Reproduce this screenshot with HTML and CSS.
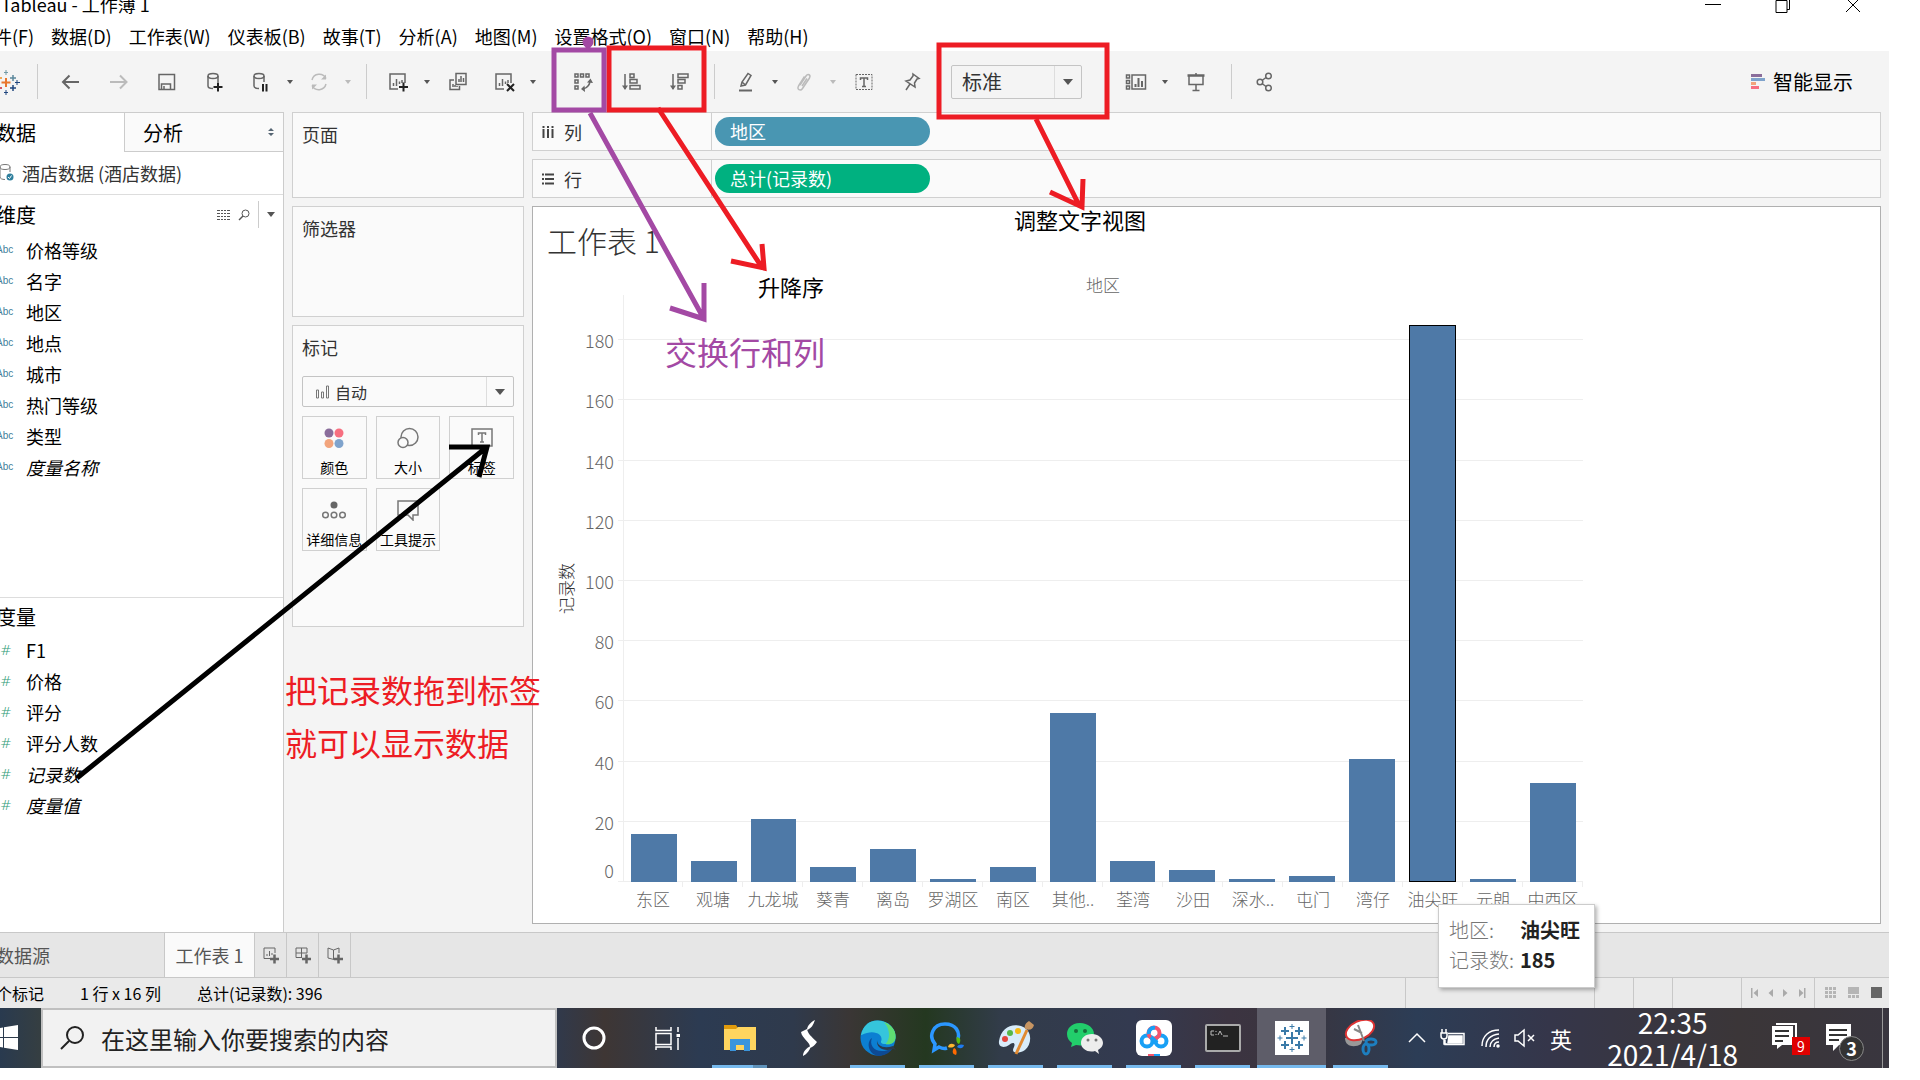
FILE: index.html
```html
<!DOCTYPE html>
<html lang="zh-CN">
<head>
    <meta charset="UTF-8">
    <meta name="viewport" content="width=device-width, initial-scale=1.0">
    <title>Tableau - 工作薄 1</title>
    <link rel="stylesheet" href="styles.css">
</head>
<body>
    <div class="app">
        <header class="titulo">
            <h1>Tableau - 工作薄 1</h1>
            <div class="ventana">
                <button type="button" aria-label="最小化"><svg width="16" height="16" viewBox="0 0 16 16"><path d="M0 7.500h16"/></svg></button>
                <button type="button" aria-label="还原"><svg width="16" height="16" viewBox="0 0 16 16"><path d="M1 3.500h11v12h-11zM12 12.500h2.500v-11h-11v2"/></svg></button>
                <button type="button" aria-label="关闭"><svg width="16" height="16" viewBox="0 0 16 16"><path d="M1 1l14 14M15 1L1 15"/></svg></button>
            </div>
        </header>

        <nav class="menu">
            <a href="#">件(F)</a>
            <a href="#">数据(D)</a>
            <a href="#">工作表(W)</a>
            <a href="#">仪表板(B)</a>
            <a href="#">故事(T)</a>
            <a href="#">分析(A)</a>
            <a href="#">地图(M)</a>
            <a href="#">设置格式(O)</a>
            <a href="#">窗口(N)</a>
            <a href="#">帮助(H)</a>
        </nav>

        <div class="toolbar">
            <button type="button" class="logo" aria-label="Tableau">
                <svg width="26" height="26" viewBox="0 0 26 26"><path d="M10 9v9M5.500 13.500h9" stroke="#e8762d" stroke-width="2"/><path d="M17 6v6M14 9h6" stroke="#5b879b" stroke-width="1.500"/><path d="M17 16v6M14 19h6" stroke="#1f457e" stroke-width="1.500"/><path d="M3 6v6M0 9h6" stroke="#eb912c" stroke-width="1.500"/><path d="M3 16v6M0 19h6" stroke="#c72035" stroke-width="1.500"/><path d="M10 1v5M8 3.500h4" stroke="#7199a6"/><path d="M10 21v5M8 23.500h4" stroke="#1f457e"/><path d="M21 11v5M19 13.500h5" stroke="#1f457e"/></svg>
            </button>
            <span class="sep"></span>
            <div class="grupo">
                <button type="button" class="tool" aria-label="撤消"><svg width="20" height="20" viewBox="0 0 20 20"><path d="M2 10h16M8.500 3.500L2 10l6.500 6.500" stroke-width="2"/></svg></button>
                <button type="button" class="tool claro" aria-label="重做"><svg width="20" height="20" viewBox="0 0 20 20"><path d="M1 10h16M11 3.500l6.500 6.500-6.500 6.500" stroke-width="2"/></svg></button>
                <button type="button" class="tool" aria-label="保存"><svg width="18" height="18" viewBox="0 0 18 18"><path d="M1 1.500h15.500v15H1zM3.500 16.500v-5.500h9v5.500M6 16v-3"/></svg></button>
                <button type="button" class="tool" aria-label="新建数据源"><svg width="20" height="20" viewBox="0 0 20 20"><ellipse cx="8" cy="4" rx="5" ry="2.500"/><path d="M3 4v10c0 1.500 2 2.500 5 2.500M13 4v6"/><path d="M8.500 15h9M13 10.500v9" stroke="#222" stroke-width="2"/></svg></button>
                <button type="button" class="tool con-flecha" aria-label="暂停自动更新"><svg width="20" height="20" viewBox="0 0 20 20"><ellipse cx="8" cy="4" rx="5" ry="2.500"/><path d="M3 4v10c0 1.500 2 2.500 5 2.500M13 4v6"/><path d="M12 12v7.500M15.500 12v7.500" stroke="#222" stroke-width="2"/></svg></button>
                <button type="button" class="flecha" aria-label="更多"></button>
                <button type="button" class="tool con-flecha claro" aria-label="刷新"><svg width="20" height="20" viewBox="0 0 20 20"><path d="M3 8a7.500 7.500 0 0 1 14-1.500M17 12a7.500 7.500 0 0 1-14 1.500"/><path d="M17 2.500v5h-5zM3 17.500v-5h5z" fill="#bbb" stroke="none"/></svg></button>
                <button type="button" class="flecha claro" aria-label="更多"></button>
            </div>
            <span class="sep"></span>
            <div class="grupo">
                <button type="button" class="tool con-flecha" aria-label="新建工作表"><svg width="22" height="20" viewBox="0 0 22 20"><path d="M11 17H3V2h15v9M6.500 14v-3M9.500 14V7M12.500 12V9.500M15 11V8"/><path d="M12 15h9M16.500 10.500v9" stroke="#222" stroke-width="2"/></svg></button>
                <button type="button" class="flecha" aria-label="更多"></button>
                <button type="button" class="tool" aria-label="复制"><svg width="20" height="20" viewBox="0 0 20 20"><path d="M8 1.500h10v11H8zM11 10V7M13 10V4M15.500 10V6M6 8H2v9.500h9.500V14M5 15v-3M7 15v-2M9 15v-1"/></svg></button>
                <button type="button" class="tool con-flecha" aria-label="清除"><svg width="22" height="20" viewBox="0 0 22 20"><path d="M11 17H3V2h15v9M6.500 14v-3M9.500 14V7M12.500 12V9.500M15 11V8"/><path d="M14 12l7 7M21 12l-7 7" stroke="#222" stroke-width="2"/></svg></button>
                <button type="button" class="flecha" aria-label="更多"></button>
            </div>
            <div class="grupo ordenar">
                <button type="button" class="tool" aria-label="交换行和列"><svg width="20" height="20" viewBox="0 0 20 20"><path d="M2 2h3v3H2zM7.500 2h3v3h-3zM13 2h3v3h-3zM2 8h3v3H2zM2 14h3v3H2zM17 8c0 5-3 8-7 9"/><path d="M14 10.500l3.500-4 2.500 4.500zM11.500 13.500L8 17l4 3z" fill="#666" stroke="none"/></svg></button>
                <button type="button" class="tool" aria-label="升序"><svg width="20" height="20" viewBox="0 0 20 20"><path d="M4 2v15M9 2h4v3.500H9zM9 7.500h7V11H9zM9 13.500h10V17H9z"/><path d="M1 13.500h6L4 18z" fill="#666" stroke="none"/></svg></button>
                <button type="button" class="tool" aria-label="降序"><svg width="20" height="20" viewBox="0 0 20 20"><path d="M4 2v15M9 2h10v3.500H9zM9 7.500h7V11H9zM9 13.500h4V17H9z"/><path d="M1 13.500h6L4 18z" fill="#666" stroke="none"/></svg></button>
            </div>
            <span class="sep"></span>
            <div class="grupo">
                <button type="button" class="tool con-flecha" aria-label="突出显示"><svg width="20" height="20" viewBox="0 0 20 20"><path d="M5 14l1-4L12 1.500l3 2L9.500 13zM6 10l3.500 3"/><path d="M3 18.500h13" stroke-width="2"/></svg></button>
                <button type="button" class="flecha" aria-label="更多"></button>
                <button type="button" class="tool con-flecha claro" aria-label="组"><svg width="20" height="20" viewBox="0 0 20 20"><path d="M6 13l6-9c2-3 5-1 3.500 2l-7 10.500c-2 3-6 1-4-2.500l6-9.500M8 14l5-7.500"/></svg></button>
                <button type="button" class="flecha claro" aria-label="更多"></button>
                <button type="button" class="tool" aria-label="显示标记标签"><svg width="20" height="20" viewBox="0 0 20 20"><path d="M2 2.500h16v15H2z" stroke-width="1" stroke-dasharray="2 1"/><path d="M6.500 8V6h7v2M10 6v8.500M8 14.500h4"/></svg></button>
                <button type="button" class="tool" aria-label="固定轴"><svg width="20" height="20" viewBox="0 0 20 20"><path d="M11 2l6 4.500-2 .5-2.500 4 .5 4-9-6 4-1 3-4zM8 12l-4 6"/></svg></button>
            </div>
            <span class="combo ajuste">
                <select aria-label="适合"><option>标准</option></select>
                <span class="abrir"></span>
            </span>
            <div class="grupo">
                <button type="button" class="tool con-flecha" aria-label="显示/隐藏卡"><svg width="22" height="18" viewBox="0 0 22 18"><path d="M1.500 2h3v3h-3zM1.500 7.500h3v3h-3zM1.500 13h3v3h-3zM7 2h13.500v14H7z"/><path d="M10.500 14v-3M13.500 14V5M17 14V8" stroke-width="2"/></svg></button>
                <button type="button" class="flecha" aria-label="更多"></button>
                <button type="button" class="tool" aria-label="演示模式"><svg width="20" height="20" viewBox="0 0 20 20"><path d="M3 4v8.500h14V4M10 12.500V18M6.500 18.500h7M10 1v2"/><path d="M1.500 3.500h17" stroke-width="2.500"/></svg></button>
            </div>
            <span class="sep"></span>
            <button type="button" class="tool" aria-label="共享"><svg width="18" height="20" viewBox="0 0 18 20"><circle cx="4" cy="10" r="2.800"/><circle cx="12.500" cy="4" r="2.800"/><circle cx="12.500" cy="16" r="2.800"/><path d="M6 8.500l4-3M6 11.500l4 3"/></svg></button>
            <button type="button" class="inteligente">
                <svg width="15" height="16" viewBox="0 0 15 16"><path fill="#8a6d9b" d="M0 0h11v3H0z"/><path fill="#7fa3cc" d="M0 4h14v3H0z"/><path fill="#f2a47c" d="M0 8h5v3H0z"/><path fill="#f76f80" d="M0 12h8v3H0z"/></svg>
                智能显示
            </button>
        </div>

        <main class="trabajo">
            <aside class="datos">
                <div class="pestanas">
                    <button type="button" class="activa">数据</button>
                    <button type="button">分析
                        <svg width="8" height="12" viewBox="0 0 8 12"><path fill="#566573" d="M4 2l3 3H1zM4 10l3-3H1z"/></svg>
                    </button>
                </div>
                <div class="fuente">
                    <svg width="18" height="20" viewBox="0 0 18 20"><g fill="none" stroke="#777"><ellipse cx="9" cy="4" rx="5" ry="2.500"/><path d="M4 4v10c0 1.500 2 2.500 5 2.500M14 4v5"/></g><circle cx="14" cy="14" r="3.500" fill="#2f7f9d"/><path d="M12 14l1.500 1.500 2-3" fill="none" stroke="#fff"/></svg>
                    酒店数据 (酒店数据)
                </div>
                <div class="campos">
                    <section class="seccion">
                        <h2>维度
                            <span class="acciones">
                                <svg width="13" height="12" viewBox="0 0 13 12"><path stroke="#555" d="M0 1.500h3M4 1.500h2M7 1.500h2M10 1.500h3M0 4.500h3M4 4.500h2M7 4.500h2M10 4.500h3M0 7.500h3M4 7.500h2M7 7.500h2M10 7.500h3M0 10.500h3M4 10.500h2M7 10.500h2M10 10.500h3"/></svg>
                                <svg width="12" height="12" viewBox="0 0 12 12"><circle cx="7.500" cy="4.500" r="3.500" fill="none" stroke="#555"/><path stroke="#555" stroke-width="1.500" d="M5 7l-4 4"/></svg>
                                <button type="button" class="flecha" aria-label="菜单"></button>
                            </span>
                        </h2>
                        <ul>
                            <li><span class="abc">Abc</span>价格等级</li>
                            <li><span class="abc">Abc</span>名字</li>
                            <li><span class="abc">Abc</span>地区</li>
                            <li><span class="abc">Abc</span>地点</li>
                            <li><span class="abc">Abc</span>城市</li>
                            <li><span class="abc">Abc</span>热门等级</li>
                            <li><span class="abc">Abc</span>类型</li>
                            <li><span class="abc">Abc</span><em>度量名称</em></li>
                        </ul>
                    </section>
                    <section class="seccion">
                        <h2>度量</h2>
                        <ul>
                            <li><span class="num">#</span>F1</li>
                            <li><span class="num">#</span>价格</li>
                            <li><span class="num">#</span>评分</li>
                            <li><span class="num">#</span>评分人数</li>
                            <li><span class="num">#</span><em>记录数</em></li>
                            <li><span class="num">#</span><em>度量值</em></li>
                        </ul>
                    </section>
                </div>
            </aside>

            <div class="tarjetas">
                <section class="tarjeta paginas"><h3>页面</h3></section>
                <section class="tarjeta filtros"><h3>筛选器</h3></section>
                <section class="tarjeta marcas">
                    <h3>标记</h3>
                    <span class="combo tipo">
                        <svg width="15" height="14" viewBox="0 0 15 14"><path fill="none" stroke="#777" d="M1.500 5h2v8h-2zM6.500 7h2v6h-2zM11.500 1h2v12h-2z"/></svg>
                        <select aria-label="标记类型"><option>自动</option></select>
                        <span class="abrir"></span>
                    </span>
                    <div class="botones">
                        <button type="button"><svg width="24" height="22" viewBox="0 0 24 22"><circle cx="7" cy="6" r="4.500" fill="#8a6d9b"/><circle cx="17" cy="6" r="4.500" fill="#f76f80"/><circle cx="7" cy="16.500" r="4.500" fill="#f2a47c"/><circle cx="17" cy="16.500" r="4.500" fill="#7fa3cc"/></svg>颜色</button>
                        <button type="button"><svg width="24" height="22" viewBox="0 0 24 22"><g fill="#fafafa" stroke="#777" stroke-width="1.500"><circle cx="13.500" cy="10" r="8.500"/><circle cx="7" cy="15.500" r="5"/></g></svg>大小</button>
                        <button type="button"><svg width="24" height="22" viewBox="0 0 24 22"><g fill="none" stroke="#777" stroke-width="1.500"><path d="M2 2h20v17H2z"/><path d="M8.500 8V6h7v2M12 6v9M10 15h4"/></g></svg>标签</button>
                        <button type="button"><svg width="24" height="22" viewBox="0 0 24 22"><circle cx="12" cy="6" r="3.500" fill="#666"/><g fill="none" stroke="#777" stroke-width="1.500"><circle cx="3.500" cy="16" r="2.800"/><circle cx="12" cy="16" r="2.800"/><circle cx="20.500" cy="16" r="2.800"/></g></svg>详细信息</button>
                        <button type="button"><svg width="24" height="22" viewBox="0 0 24 22"><path fill="none" stroke="#777" stroke-width="1.500" d="M2 2h20v14h-5v5l-5-5H2z"/></svg>工具提示</button>
                    </div>
                </section>
            </div>

            <div class="lienzo">
                <div class="estante">
                    <h3><svg width="12" height="14" viewBox="0 0 12 14"><path stroke="#444" stroke-width="2" d="M1.500 1v2M6 1v2M10.500 1v2M1.500 4v9M6 4v9M10.500 4v9"/></svg>列</h3>
                    <button type="button" class="pildora dimension">地区</button>
                </div>
                <div class="estante">
                    <h3><svg width="12" height="14" viewBox="0 0 12 14"><path stroke="#444" stroke-width="2" d="M0 2.500h2M0 7h2M0 11.500h2M3 2.500h9M3 7h9M3 11.500h9"/></svg>行</h3>
                    <button type="button" class="pildora medida">总计(记录数)</button>
                </div>

                <section class="vista">
                    <h2>工作表 1</h2>
                    <div class="grafico">
                        <div class="cabecera">地区</div>
                        <div class="eje-titulo"><span>记录数</span></div>
                        <div class="eje">
                            <span>0</span><span>20</span><span>40</span><span>60</span><span>80</span><span>100</span><span>120</span><span>140</span><span>160</span><span>180</span>
                        </div>
                        <div class="barras">
                            <div class="lineas"><i></i><i></i><i></i><i></i><i></i><i></i><i></i><i></i><i></i><i></i></div>
                            <div class="barra" style="--v:16"></div>
                            <div class="barra" style="--v:7"></div>
                            <div class="barra" style="--v:21"></div>
                            <div class="barra" style="--v:5"></div>
                            <div class="barra" style="--v:11"></div>
                            <div class="barra" style="--v:1"></div>
                            <div class="barra" style="--v:5"></div>
                            <div class="barra" style="--v:56"></div>
                            <div class="barra" style="--v:7"></div>
                            <div class="barra" style="--v:4"></div>
                            <div class="barra" style="--v:1"></div>
                            <div class="barra" style="--v:2"></div>
                            <div class="barra" style="--v:41"></div>
                            <div class="barra elegida" style="--v:185"></div>
                            <div class="barra" style="--v:1"></div>
                            <div class="barra" style="--v:33"></div>
                        </div>
                        <div class="categorias">
                            <span>东区</span><span>观塘</span><span>九龙城</span><span>葵青</span><span>离岛</span><span>罗湖区</span><span>南区</span><span>其他..</span><span>荃湾</span><span>沙田</span><span>深水..</span><span>屯门</span><span>湾仔</span><span>油尖旺</span><span>元朗</span><span>中西区</span>
                        </div>
                    </div>
                    <dl class="tooltip">
                        <dt>地区:</dt><dd>油尖旺</dd>
                        <dt>记录数:</dt><dd>185</dd>
                    </dl>
                </section>
            </div>
        </main>

        <div class="hojas">
            <button type="button" class="origen">数据源</button>
            <button type="button" class="hoja">工作表 1</button>
            <button type="button" class="nueva" aria-label="新建工作表"><svg width="18" height="18" viewBox="0 0 18 18"><path d="M8 12.500H2V2h11v5M5 10V8M7.500 10V5M10 9V7"/><path d="M8 13h9M12.500 8.500v9" stroke-width="2.500"/></svg></button>
            <button type="button" class="nueva" aria-label="新建仪表板"><svg width="18" height="18" viewBox="0 0 18 18"><path d="M8 11.500H2V2h11v5M2 7h11M7.500 2v9"/><path d="M8 13h9M12.500 8.500v9" stroke-width="2.500"/></svg></button>
            <button type="button" class="nueva" aria-label="新建故事"><svg width="18" height="18" viewBox="0 0 18 18"><path d="M8 13.500L2 12V2l5.500 2L13 2v5M7.500 4v9"/><path d="M8 13h9M12.500 8.500v9" stroke-width="2.500"/></svg></button>
        </div>

        <footer class="estado">
            <span>个标记</span>
            <span>1 行 x 16 列</span>
            <span>总计(记录数): 396</span>
            <div class="casillas">
                <i class="c-xl"></i><i class="c-s"></i><i class="c-s"></i><i class="c-m"></i>
                <div class="nav-hojas">
                    <svg width="66" height="12" viewBox="0 0 66 12"><path fill="#aaa" d="M0 1h1.500v10H0zM7 2v8L2.500 6zM22 2v8l-4.500-4zM32 2v8l4.500-4zM48 2v8l4.500-4zM53 1h1.500v10H53z"/></svg>
                </div>
                <div class="modos">
                    <svg width="58" height="12" viewBox="0 0 58 12"><path fill="#b5b5b5" d="M0 0h3v3H0zM4 0h3v3H4zM8 0h3v3H8zM0 4h3v3H0zM4 4h3v3H4zM8 4h3v3H8zM0 8h3v3H0zM4 8h3v3H4zM8 8h3v3H8zM23 0h11v7H23zM23 8h3v3h-3zM27 8h3v3h-3zM31 8h3v3h-3z"/><path fill="#666" d="M46 0h11v11H46z"/></svg>
                </div>
            </div>
        </footer>
    </div>

    <div class="barra-tareas">
        <button type="button" class="inicio" aria-label="开始"><svg width="18" height="26" viewBox="0 0 18 26"><path fill="#fff" d="M0 3l3-.5V12H0zM4 2.300L18 0v12H4zM0 13h3v9.500L0 22zM4 13h14v12L4 22.700z"/></svg></button>
        <label class="buscar">
            <svg width="26" height="26" viewBox="0 0 26 26"><circle cx="16" cy="10" r="8" fill="none" stroke="#222" stroke-width="2"/><path stroke="#222" stroke-width="2" d="M10 16l-8 8"/></svg>
            <input type="text" aria-label="搜索" placeholder="在这里输入你要搜索的内容">
        </label>
        <button type="button" class="icono sistema" aria-label="Cortana"><svg width="26" height="26" viewBox="0 0 26 26"><circle cx="13" cy="13" r="10" fill="none" stroke="#fff" stroke-width="3"/></svg></button>
        <button type="button" class="icono sistema" aria-label="任务视图"><svg width="26" height="26" viewBox="0 0 26 26"><path fill="none" stroke="#fff" stroke-width="1.500" d="M1 2v3.500h15V2M1 8.500h15v11H1zM1 25v-3h15v3M23 2v5M23 13v12"/><path fill="#fff" d="M21.500 9h3.500v3h-3.500z"/></svg></button>
        <button type="button" class="icono abierto doble" aria-label="文件资源管理器"><svg width="36" height="36" viewBox="0 0 36 36"><path fill="#e09a0b" d="M2 5h12l2 3v5H2z"/><path fill="#ffd55f" d="M2 9h12l2-2h18v23H2z"/><path fill="#3b95dc" d="M8 19h20v12h-6v-6h-8v6H8z"/></svg></button>
        <button type="button" class="icono" aria-label="S"><svg width="36" height="36" viewBox="0 0 36 36"><path fill="#fff" d="M24 0c-2 5-3 8-8 10 0-4 4-8 8-10zM10 12l6-3c1 5 4 7 10 13-2 3-4 5-7 6 1-6-8-9-9-16zM12 36c0-4 3-8 8-10-1 4-4 8-8 10z"/></svg></button>
        <button type="button" class="icono abierto" aria-label="Edge"><svg width="36" height="36" viewBox="0 0 36 36"><circle cx="18" cy="18" r="17.500" fill="#0c7fd2"/><path fill="#35c5dc" d="M1 15C3 5 10 0 18 .5 29 1 36 9 35.500 17c0 6-5 8-10 7-5 0-5-2-4-4 1-6-8-11-20-5z"/><path fill="#5fdc72" d="M24 2c8 3 12 9 11.500 15 0 6-5 8-10 7 5-5 5-14-1.500-22z"/><path fill="#0d4a94" d="M12 18c-4 9 6 18 21 10-4 6-10 8-15 8C8 34 6 22 12 18z"/><path fill="#2c394c" d="M17 20c0 6 7 9 16 6l3 4-3-1c-9 3-17-1-16-9z"/></svg></button>
        <button type="button" class="icono abierto" aria-label="企业微信"><svg width="36" height="36" viewBox="0 0 36 36"><path fill="none" stroke="#2b97ff" stroke-width="3.500" d="M18 28c-3 1-6 0-8-1l-5 3 1-6C-1 16 4 4 16 4c11 0 15 8 13 15"/><path fill="#5bbd10" d="M28 17c4 1 4 4 2 7-3-1-3-5-2-7z"/><path fill="#1e7af0" d="M35 25c-1 4-4 4-7 2 1-3 5-3 7-2z"/><path fill="#ff6a00" d="M27 35c-4-1-4-4-2-7 3 1 3 5 2 7z"/><path fill="#ffb82e" d="M19 27c1-4 4-4 7-2-1 3-5 3-7 2z"/></svg></button>
        <button type="button" class="icono abierto" aria-label="画图"><svg width="36" height="36" viewBox="0 0 36 36"><path fill="#d8ecfa" d="M1 21C3 8 13 3 23 6c12 4 11 18 4 24-6 4-15 4-11-3 2-5-2-5-5-2-4 3-11 3-10-4z"/><circle cx="7" cy="19" r="3" fill="#e2463d"/><circle cx="12" cy="13" r="3" fill="#56b848"/><circle cx="20" cy="11" r="3" fill="#f6b916"/><path stroke="#e08a32" stroke-width="3" d="M29 10L18 34"/><path fill="#c79562" d="M27 9c-1-4 1-6 4-8l5 4c-1 4-4 6-9 4z"/></svg></button>
        <button type="button" class="icono abierto" aria-label="微信"><svg width="38" height="36" viewBox="0 0 38 36"><path fill="#22ce6b" d="M14 3C5 3 1 9 1 14c0 4 2 7 5 9l-1 4 5-2c10 2 18-3 18-11C28 8 22 3 14 3z"/><path fill="#ededed" d="M26 14c-7 0-11 4-11 9 0 6 7 10 14 8l4 3-1-4c3-2 5-4 5-7 0-5-5-9-11-9z"/><g fill="#176f3c"><circle cx="10" cy="11" r="2"/><circle cx="19" cy="11" r="2"/></g><g fill="#777"><circle cx="22" cy="20" r="1.500"/><circle cx="30" cy="20" r="1.500"/></g></svg></button>
        <button type="button" class="icono abierto" aria-label="百度网盘"><svg width="36" height="36" viewBox="0 0 36 36"><rect width="36" height="36" rx="6" fill="#fff"/><g fill="none" stroke-width="4"><circle cx="11" cy="21" r="5.500" stroke="#18a0f5"/><circle cx="25" cy="21" r="5.500" stroke="#18a0f5"/><circle cx="18" cy="13" r="5.500" stroke="#f4546c"/><path stroke="#18a0f5" d="M13 14a5 5 0 0 1 6-6M15 17l6 6"/></g><path fill="#f4546c" d="M12 34h6v2h-6z"/><path fill="#18a0f5" d="M18 34h6v2h-6z"/></svg></button>
        <button type="button" class="icono abierto" aria-label="命令提示符"><svg width="36" height="28" viewBox="0 0 36 28"><rect x="1" y="1" width="34" height="26" rx="1" fill="#222" stroke="#aaa" stroke-width="2"/><path fill="none" stroke="#bbb" d="M9 7H6v4h3M11 7v1M11 10v1M13 11l2-4 2 4M18 12h5"/></svg></button>
        <button type="button" class="icono abierto actual" aria-label="Tableau"><svg width="34" height="34" viewBox="0 0 34 34"><path fill="#fff" d="M0 0h34v34H0z"/><path stroke="#3a7aa8" stroke-width="2" d="M17 11v12M11 17h12M10 6v8M6 10h8M24 6v8M20 10h8M10 20v8M6 24h8M24 20v8M20 24h8"/><path stroke="#3a7aa8" d="M17 3v5M14.500 5.500h5M17 26v5M14.500 28.500h5M5 14.500v5M2.500 17h5M29 14.500v5M26.500 17h5"/></svg></button>
        <button type="button" class="icono abierto" aria-label="截图工具"><svg width="36" height="36" viewBox="0 0 36 36"><path fill="#999" d="M2 18l20-4-4 10C12 28 2 27 2 18z"/><ellipse cx="17" cy="10" rx="15" ry="9" transform="rotate(-25 17 10)" fill="#fff" stroke="#d33" stroke-width="2"/><path stroke="#888" stroke-width="2" d="M15 5l6 16M11 9l8 4"/><g fill="none" stroke="#1d7fc0" stroke-width="3"><ellipse cx="28" cy="22" rx="5" ry="3"/><ellipse cx="23" cy="29" rx="3" ry="5"/></g></svg></button>

        <div class="bandeja">
            <svg width="18" height="12" viewBox="0 0 18 12"><path d="M1 10l8-8 8 8"/></svg>
            <svg width="26" height="20" viewBox="0 0 26 20"><path d="M8 5.500h16v11H5V12M2 1v4M6 1v4M1 5h6v3c0 2-1 3-3 3s-3-1-3-3zM4 11v5h3"/><path fill="#fff" d="M9 8h13v7H8z"/></svg>
            <svg width="20" height="22" viewBox="0 0 20 22"><path d="M2 19C2 9 9 3 19 3M6 20c0-8 5-12 13-13M10 20c0-5 3-8 9-9M14 20c0-3 2-5 5-5"/><circle cx="18" cy="19" r="1" fill="#fff"/></svg>
            <svg width="22" height="20" viewBox="0 0 22 20"><path d="M1 7h3l6-5v16l-6-5H1zM14 7l6 6M20 7l-6 6"/></svg>
            <span class="idioma">英</span>
        </div>
        <time class="reloj"><span>22:35</span><span>2021/4/18</span></time>
        <button type="button" class="aviso" aria-label="消息"><svg width="32" height="32" viewBox="0 0 32 32"><path fill="none" stroke="#fff" stroke-width="2" d="M5 2h20v17"/><path fill="#fff" d="M1 4h21v19H11l-5 4v-4H1z"/><path stroke="#333" stroke-width="2" d="M4 9h14M4 14h14M4 19h8"/></svg><span class="rojo">9</span></button>
        <button type="button" class="aviso" aria-label="通知"><svg width="32" height="32" viewBox="0 0 32 32"><path fill="#fff" d="M1 2h25v21H14l-6 6v-6H1z"/><path stroke="#333" stroke-width="2" d="M4 8h18M4 13h18M4 18h10"/></svg><span class="redondo">3</span></button>
        <span class="escritorio"></span>
    </div>

    <!-- notas dibujadas encima de la ventana -->
    <div class="notas">
        <svg width="1200" height="820" viewBox="0 0 1200 820">
            <g stroke="#ed1c24" stroke-width="5">
                <path d="M609 48h95v62h-95zM939 45h168v72H939z"/>
                <path d="M658 108L763 269M762 244l2 24-33-7M1036 119l43 86M1083 179l-1 28-32-15"/>
            </g>
            <g stroke="#a349a4" stroke-width="5">
                <path d="M554 50h50v60h-50z"/>
                <path d="M590 113l114 206M704 283v36l-34-11M588 42v6"/>
                <circle cx="588" cy="42" r="3" fill="#a349a4"/>
            </g>
            <path stroke="#000" stroke-width="5" d="M77 778L487 447M449 447h38l-8 30"/>
        </svg>
        <p class="nota n-vista">调整文字视图</p>
        <p class="nota n-orden">升降序</p>
        <p class="nota grande n-cambio">交换行和列</p>
        <p class="nota grande n-arrastrar">把记录数拖到标签<br>就可以显示数据</p>
    </div>
</body>
</html>
```
FILE: styles.css
```css
* {
    box-sizing: border-box;
}
body {
    margin: 0;
    padding: 0 31px 12px 0;
    height: 100vh;
    display: flex;
    flex-direction: column;
    overflow: hidden;
    background: #fff;
    color: #000;
    font-family: "Noto Sans CJK SC", sans-serif;
    font-size: 18px;
}
h1, h2, h3, ul, p, dl, dd {
    margin: 0;
    padding: 0;
    font-weight: normal;
}
ul {
    list-style-type: none;
}
button, select, input {
    font: inherit;
    color: inherit;
    border: none;
    background: none;
    padding: 0;
    margin: 0;
}
svg {
    display: block;
    flex: none;
}
/* la ventana queda un poco cortada a la izquierda */
.app {
    flex: 1;
    min-height: 0;
    margin-left: -4px;
    display: flex;
    flex-direction: column;
}

/* titulo y menu */
.titulo {
    height: 22px;
    display: flex;
    justify-content: space-between;
    padding: 0 28px 0 5px;
}
.titulo h1 {
    font-size: 18px;
    line-height: 8px;
}
.ventana {
    display: flex;
    align-items: flex-start;
    gap: 54px;
    margin-top: -3px;
}
.ventana svg {
    fill: none;
    stroke: #000;
}
.menu {
    height: 29px;
    display: flex;
    align-items: center;
    gap: 17px;
    margin-left: -2px;
    line-height: 29px;
}
.menu a {
    color: #000;
    text-decoration: none;
}

/* barra de herramientas */
.toolbar {
    height: 61px;
    display: flex;
    align-items: center;
    padding-right: 36px;
    background: #f4f4f4;
}
.toolbar svg {
    margin: 0 auto;
}
.toolbar .logo svg {
    margin: 0;
}
.logo {
    width: 29px;
}
.grupo {
    display: flex;
    align-items: center;
    gap: 1px;
}
.ordenar {
    margin-left: 20px;
}
.sep {
    width: 1px;
    height: 35px;
    margin: 0 9px 0 12px;
    background: #ccc;
}
.tool {
    width: 47px;
    height: 40px;
}
.con-flecha {
    width: 44px;
}
.tool svg {
    fill: none;
    stroke: #666;
    stroke-width: 1.5;
}
.tool.claro svg {
    stroke: #bbb;
}
.flecha {
    width: 12px;
    height: 20px;
    display: flex;
    align-items: center;
    justify-content: center;
}
.flecha::before {
    content: "";
    border: 3px solid transparent;
    border-top: 4px solid #555;
    border-bottom: 0;
}
.flecha.claro::before {
    border-top-color: #bbb;
}
.combo {
    display: flex;
    align-items: center;
    border: 1px solid #c4c4c4;
    border-radius: 2px;
    color: #333;
}
.combo select {
    flex: 1;
    height: 100%;
    appearance: none;
    outline: none;
}
.abrir {
    width: 27px;
    align-self: stretch;
    display: flex;
    align-items: center;
    justify-content: center;
    border-left: 1px solid #ddd;
    pointer-events: none;
}
.abrir::before {
    content: "";
    border: 5px solid transparent;
    border-top: 6px solid #555;
    border-bottom: 0;
}
.ajuste {
    width: 131px;
    height: 34px;
    margin: 0 32px 0 16px;
    padding-left: 10px;
    font-size: 20px;
}
.inteligente {
    margin-left: auto;
    display: flex;
    align-items: center;
    gap: 7px;
    font-size: 20px;
}

/* zona de trabajo */
.trabajo {
    flex: 1;
    min-height: 0;
    display: flex;
    gap: 8px;
    padding-right: 8px;
    background: #f4f4f4;
}
.datos {
    width: 288px;
    display: flex;
    flex-direction: column;
    background: #fff;
    border: 1px solid #ccc;
    border-width: 1px 1px 0 0;
}
.pestanas {
    display: flex;
    height: 39px;
    font-size: 20px;
}
.pestanas button {
    flex: 1;
    display: flex;
    align-items: center;
    justify-content: space-between;
    padding: 0 8px 0 18px;
    background: #fafafa;
    border: 1px solid #ccc;
    border-width: 0 0 1px 1px;
}
.pestanas .activa {
    flex: none;
    width: 128px;
    padding: 0;
    background: #fff;
    border: none;
}
.fuente {
    height: 43px;
    display: flex;
    align-items: center;
    gap: 8px;
    color: #333;
    border-bottom: 1px solid #ddd;
}
.campos {
    flex: 1;
    display: grid;
    grid-template-rows: 6fr 5fr;
}
.seccion + .seccion {
    border-top: 1px solid #ddd;
}
.seccion h2 {
    height: 39px;
    display: flex;
    align-items: center;
    justify-content: space-between;
    font-size: 20px;
}
.seccion + .seccion h2 {
    height: 36px;
}
.acciones {
    display: flex;
    align-items: center;
    gap: 8px;
}
.acciones .flecha {
    width: 25px;
    height: 27px;
    border-left: 1px solid #ccc;
}
.acciones .flecha::before {
    border-width: 5px 4px 0;
}
.seccion li {
    display: flex;
    align-items: center;
    height: 31px;
}
.seccion li span {
    width: 30px;
}
.abc {
    font: 10px "Liberation Sans", sans-serif;
    color: #3f7f9c;
}
.num {
    padding-left: 4px;
    font-family: "DejaVu Sans";
    font-weight: 200;
    font-size: 14px;
    color: #2f9d78;
}

/* tarjetas */
.tarjetas {
    width: 232px;
    display: flex;
    flex-direction: column;
    gap: 8px;
}
.tarjeta {
    padding: 8px 9px;
    background: #fafafa;
    border: 1px solid #d0d0d0;
    color: #333;
}
.tarjeta h3 {
    font-size: 18px;
    line-height: 26px;
}
.paginas {
    height: 86px;
}
.filtros {
    height: 111px;
}
.marcas {
    height: 302px;
}
.tipo {
    height: 31px;
    margin: 16px 0 9px;
    padding-left: 12px;
    gap: 5px;
    font-size: 16px;
}
.botones {
    display: grid;
    grid-template-columns: repeat(3, 1fr);
    gap: 9px;
}
.botones button {
    height: 63px;
    display: flex;
    flex-direction: column;
    align-items: center;
    justify-content: space-between;
    padding-top: 10px;
    border: 1px solid #d0d0d0;
    font-size: 14px;
    line-height: 22px;
    color: #000;
    white-space: nowrap;
}

/* estantes y vista */
.lienzo {
    flex: 1;
    min-width: 0;
    display: flex;
    flex-direction: column;
    gap: 8px;
    padding-bottom: 8px;
}
.estante {
    height: 39px;
    display: flex;
    align-items: center;
    gap: 3px;
    background: #fafafa;
    border: 1px solid #d0d0d0;
}
.estante h3 {
    width: 179px;
    height: 100%;
    display: flex;
    align-items: center;
    gap: 10px;
    padding-left: 9px;
    border-right: 1px solid #d0d0d0;
    font-size: 18px;
    color: #333;
}
.pildora {
    width: 215px;
    height: 29px;
    padding-left: 15px;
    border-radius: 15px;
    text-align: left;
    line-height: 29px;
    color: #fff;
}
.dimension {
    background: #4996b2;
}
.medida {
    background: #00b180;
}
.vista {
    position: relative;
    flex: 1;
    min-height: 0;
    display: flex;
    flex-direction: column;
    padding: 12px 14px 5px;
    background: #fff;
    border: 1px solid #b0b0b0;
}
.vista h2 {
    font-size: 30px;
    font-weight: 300;
    line-height: 42px;
    color: #333;
}
.grafico {
    flex: 1;
    min-height: 0;
    display: grid;
    grid-template-columns: 22px 39px minmax(0, 969px);
    grid-template-rows: 34px 1fr 36px;
    padding-left: 6px;
    font-size: 17px;
    font-weight: 300;
    color: #666;
}
.cabecera {
    grid-column: 3;
    margin-left: 9px;
    padding-top: 14px;
    line-height: 20px;
    text-align: center;
}
.eje-titulo {
    display: flex;
    align-items: center;
    color: #333;
}
.eje-titulo span {
    writing-mode: vertical-rl;
    text-orientation: sideways;
    transform: rotate(180deg);
}
.eje {
    display: flex;
    flex-direction: column-reverse;
    font-size: 18px;
    line-height: 24px;
}
.eje span {
    flex: none;
    height: calc(20 / 195 * 100%);
    display: flex;
    align-items: flex-end;
    justify-content: flex-end;
    position: relative;
    top: 12px;
}
.eje span:first-child {
    top: 0;
}
.eje span:last-child {
    height: calc(15 / 195 * 100%);
}
.barras {
    position: relative;
    display: flex;
    align-items: flex-end;
    margin-left: 9px;
    border-left: 1px solid #eee;
}
.lineas {
    position: absolute;
    inset: 0 0 0 -6px;
    display: flex;
    flex-direction: column-reverse;
}
.lineas i {
    height: calc(20 / 195 * 100%);
    flex: none;
    border-bottom: 1px solid #eee;
}
.lineas i:last-child {
    height: calc(15 / 195 * 100%);
}
.barra {
    position: relative;
    flex: 1;
    margin: 0 7px;
    height: calc(var(--v) / 195 * 100%);
    background: #4e79a7;
}
.elegida {
    border: 1px solid #000;
}
.categorias {
    grid-column: 3;
    margin-left: 9px;
    display: flex;
    line-height: 34px;
    white-space: nowrap;
}
.categorias span {
    flex: 1;
    text-align: center;
    background: linear-gradient(#eee, #eee) right top / 1px 5px no-repeat;
}
.tooltip {
    position: absolute;
    left: 905px;
    top: 697px;
    width: 157px;
    height: 84px;
    display: grid;
    grid-template-columns: 71px 1fr;
    align-content: start;
    padding: 10px 0 0 10px;
    background: #fff;
    border: 1px solid #ccc;
    box-shadow: 2px 2px 4px rgba(0, 0, 0, .3);
    font-size: 20px;
    line-height: 30px;
    white-space: nowrap;
    z-index: 2;
}
.tooltip dt {
    font-weight: 300;
    color: #777;
}
.tooltip dd {
    font-weight: bold;
    color: #222;
}

/* hojas y estado */
.hojas {
    height: 45px;
    display: flex;
    background: #e6e6e6;
    border-top: 1px solid #c8c8c8;
    color: #555;
}
.hojas button {
    border-right: 1px solid #c8c8c8;
}
.origen {
    width: 169px;
    text-align: left;
}
.hoja {
    width: 90px;
    background: #fafafa;
}
.nueva {
    width: 32px;
}
.nueva svg {
    margin: 0 auto;
    fill: none;
    stroke: #666;
}
.estado {
    height: 31px;
    display: flex;
    align-items: center;
    gap: 36px;
    background: #eaeaea;
    border-top: 1px solid #c8c8c8;
    font-size: 16px;
    line-height: 28px;
}
.casillas {
    margin-left: auto;
    align-self: stretch;
    display: flex;
}
.casillas > * {
    display: flex;
    align-items: center;
    border-left: 1px solid #c8c8c8;
}
.c-xl {
    width: 228px;
}
.c-s {
    width: 39px;
}
.c-m {
    width: 69px;
}
.casillas .c-xl {
    width: 189px;
}
.nav-hojas {
    width: 73px;
    padding-left: 9px;
}
.modos {
    width: 75px;
    padding-left: 10px;
}

/* barra de tareas */
.barra-tareas {
    height: 60px;
    display: flex;
    align-items: stretch;
    overflow: hidden;
    background: linear-gradient(90deg, #293a4f, #3a403c 3%, #2e3a50 29%, #3e3634 32%, #2c3b52 37%, #2f3a4c 42%, #3a3635 45%, #243820 49%, #323c4a 53%, #333a50 60%, #3c3441 65%, #39353f 69%, #2c3d56 75%, #35364a 82%, #3b3638 92%, #39363f);
    color: #fff;
}
.inicio {
    width: 41px;
}
.buscar {
    width: 516px;
    display: flex;
    align-items: center;
    gap: 16px;
    padding-left: 16px;
    background: #f2f2f2;
    border: 2px solid #c0c0c0;
    font-size: 24px;
}
.buscar input {
    flex: 1;
    outline: none;
}
.buscar input::placeholder {
    color: #222;
}
.icono {
    width: 69px;
    display: flex;
    align-items: center;
    justify-content: center;
}
.sistema {
    width: 74px;
}
.abierto {
    background: linear-gradient(#76b9ed, #76b9ed) center bottom / 55px 3px no-repeat;
}
.doble {
    background: linear-gradient(90deg, #76b9ed 75%, #5f92ba 75%) center bottom / 55px 3px no-repeat;
}
.actual {
    background: linear-gradient(#76b9ed, #76b9ed) center bottom / 100% 3px no-repeat, #5e5d69;
}
.bandeja {
    display: flex;
    align-items: center;
    gap: 14px;
    margin-left: 13px;
}
.bandeja svg {
    fill: none;
    stroke: #fff;
    stroke-width: 1.5;
}
.idioma {
    font-size: 22px;
}
.reloj {
    display: flex;
    flex-direction: column;
    justify-content: center;
    margin: 0 22px 0 auto;
    font-size: 28px;
    line-height: 32px;
    text-align: center;
}
.aviso {
    position: relative;
    width: 54px;
    display: flex;
    align-items: center;
    justify-content: center;
}
.rojo, .redondo {
    position: absolute;
    right: 4px;
    bottom: 13px;
    width: 18px;
    font-size: 14px;
    line-height: 18px;
    background: #e00000;
}
.redondo {
    right: 4px;
    bottom: 7px;
    width: 25px;
    font-size: 18px;
    font-weight: bold;
    line-height: 23px;
    border: 1px solid #888;
    border-radius: 50%;
    background: #333;
}
.escritorio {
    width: 7px;
    margin-left: 14px;
    border-left: 1px solid #999;
}

/* notas */
.notas {
    position: absolute;
    left: 0;
    top: 0;
    pointer-events: none;
}
.notas svg {
    fill: none;
}
.nota {
    position: absolute;
    font-size: 22px;
    line-height: 32px;
    white-space: nowrap;
}
.grande {
    font-size: 32px;
    line-height: 53px;
}
.n-vista {
    left: 1014px;
    top: 203px;
}
.n-orden {
    left: 758px;
    top: 270px;
}
.n-cambio {
    left: 665px;
    top: 325px;
    color: #a349a4;
}
.n-arrastrar {
    left: 285px;
    top: 663px;
    color: #ed1c24;
}
```
